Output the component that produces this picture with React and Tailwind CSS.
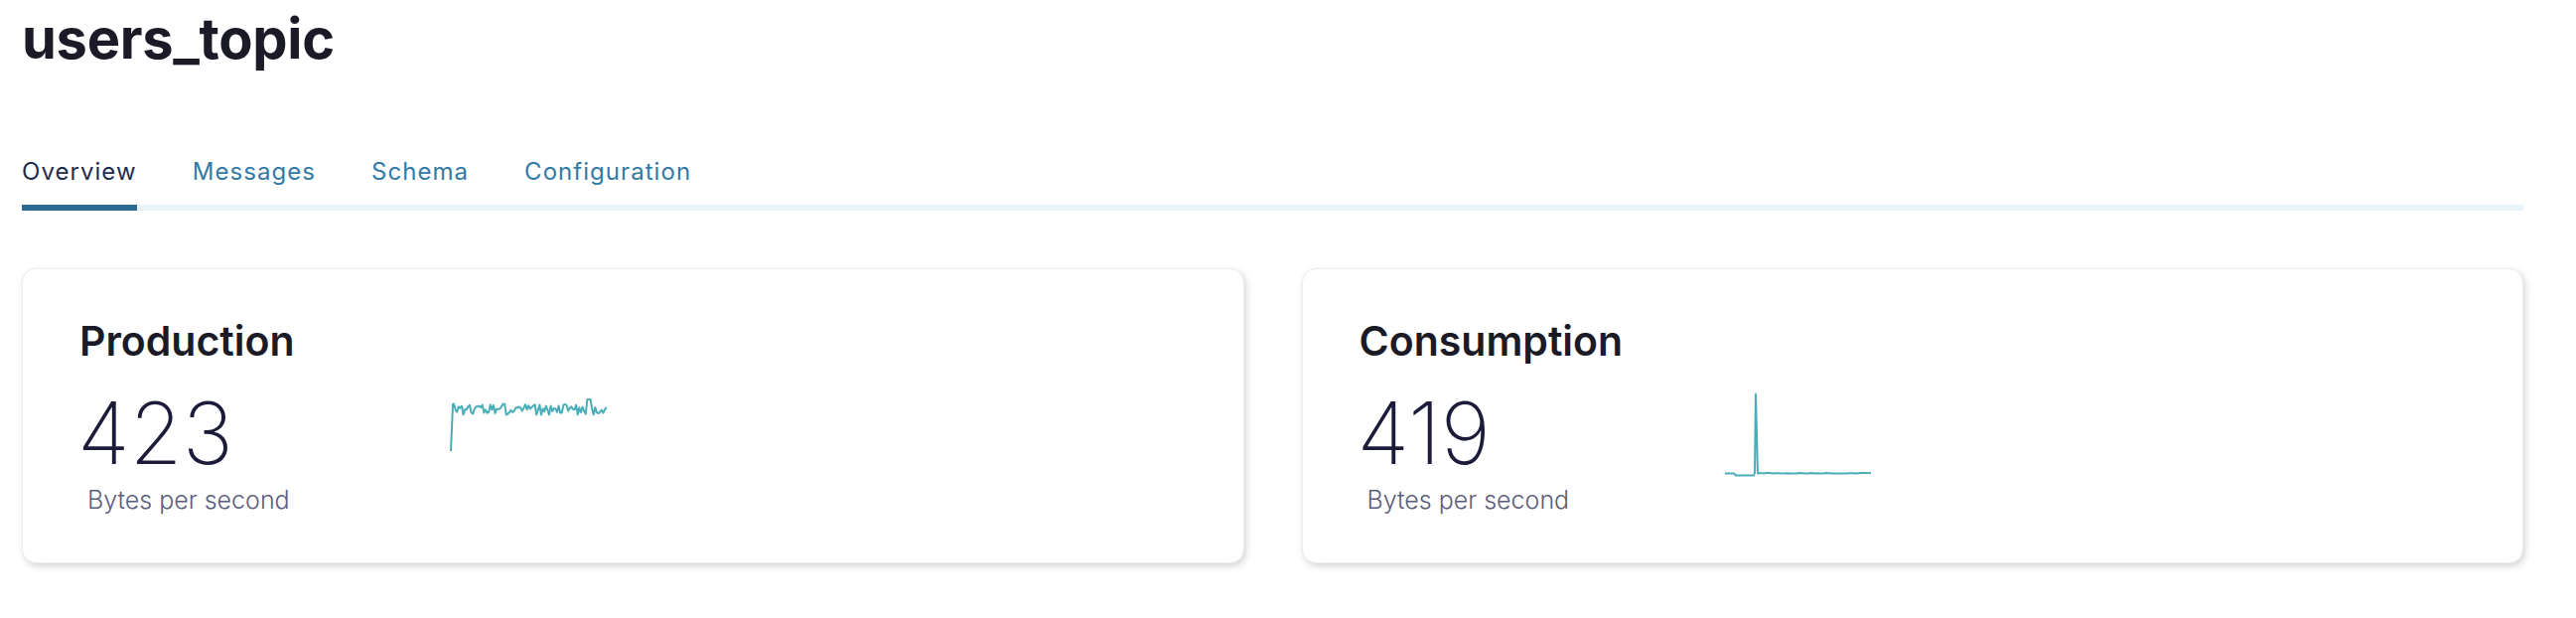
import React from 'react';

const tabs = ['Overview', 'Messages', 'Schema', 'Configuration'];

// small seeded random so the sparkline stays the same on every render
const makeRand = (seed) => () => {
    seed = (seed * 16807) % 2147483647;
    return (seed - 1) / 2147483646;
};

const productionPoints = () => {
    const rand = makeRand(42);
    const pts = [[3, 61], [5, 14]];
    for (let x = 6; x <= 160; x += 1.6) {
        let y = 19 + (rand() - 0.5) * 11;
        if (x > 140 && x < 145) y = 9;
        pts.push([x, y]);
    }
    return pts;
};

const consumptionPoints = () => {
    const rand = makeRand(7);
    const pts = [[0, 83.5], [9, 83.5], [11, 85.5], [29, 85.5], [30, 83], [31, 3.5], [33, 83.5]];
    for (let x = 36; x <= 149; x += 3) {
        pts.push([x, 83.3 + (rand() - 0.5) * 0.8]);
    }
    return pts;
};

const toPath = (pts) => pts.map(([x, y], i) => `${i ? 'L' : 'M'}${x.toFixed(1)} ${y.toFixed(1)}`).join(' ');

const Sparkline = ({ points }) => (
    <svg width="162" height="90" viewBox="0 0 162 90" className="shrink-0">
        <path d={toPath(points)} fill="none" stroke="#4aaeb9" strokeWidth="2" strokeLinejoin="round" />
    </svg>
);

const MetricCard = ({ title, value, points, chartOffset }) => (
    <div className="flex-1 bg-white rounded-[14px] border border-[#ececec] shadow-[2px_3px_7px_rgba(0,0,0,0.16)] pt-[48px] pb-[47px] pl-[57px]">
        <h3 className="text-[41px] leading-[48px] font-semibold text-[#1b1b27]">{title}</h3>
        <div className="flex items-start mt-[26px]">
            <div className={`shrink-0 ${chartOffset}`}>
                <div className="text-[86px] leading-[86px] font-[150] text-[#1c1c3a] -ml-[2px]">{value}</div>
                <div className="pl-[8px] mt-[8px] text-[25px] leading-[32px] font-light text-[#5c5c7c]">Bytes per second</div>
            </div>
            <Sparkline points={points} />
        </div>
    </div>
);

const App = () => {
    return (
        <div className="min-h-screen bg-white pl-[22px] pr-[53px] pt-[3px] font-['Inter',_'Liberation_Sans',_sans-serif]">
            <h1 className="text-[56px] leading-[72px] font-bold text-[#1b1b28] tracking-[-0.3px]">users_topic</h1>

            <div className="mt-[82px] flex gap-[56px] border-b-[6px] border-[#e8f2f9]">
                {tabs.map((tab, i) => (
                    <div
                        key={tab}
                        className={`relative pb-[17px] text-[24px] leading-[32px] tracking-[1.05px] ${i === 0 ? 'text-[#1e2c4d]' : 'text-[#337aa6]'}`}
                    >
                        {tab}
                        {i === 0 && <div className="absolute left-0 right-0 -bottom-[6px] h-[6px] bg-[#2b6a90]" />}
                    </div>
                ))}
            </div>

            <div className="mt-[58px] flex gap-[58px]">
                <MetricCard title="Production" value="423" points={productionPoints()} chartOffset="w-[371px]" />
                <MetricCard title="Consumption" value="419" points={consumptionPoints()} chartOffset="w-[368px]" />
            </div>
        </div>
    );
};

export default App;
